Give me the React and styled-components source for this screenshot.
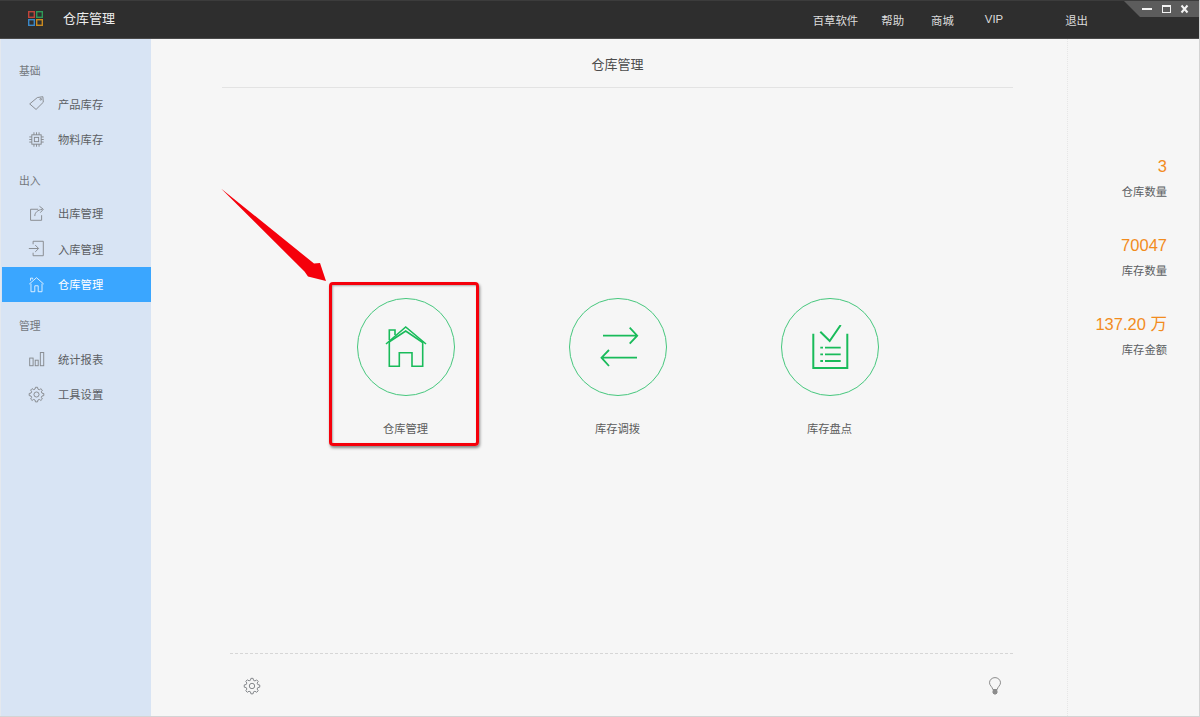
import React from "react";
import styled, { createGlobalStyle } from "styled-components";

const Global = createGlobalStyle`
  html, body { margin: 0; padding: 0; background: #f6f6f6; }
  body { font-family: "Liberation Sans", "Noto Sans CJK SC", sans-serif; }
  * { box-sizing: border-box; }
`;

const Win = styled.div`
  width: 1200px; height: 717px; display: flex; flex-direction: column; overflow: hidden;
  background: #f6f6f6; border-right: 1px solid #d4d4d4; border-bottom: 1px solid #d4d4d4;
  position: relative;
`;
const TitleBar = styled.header`
  height: 39px; flex: none; display: flex; align-items: center; position: relative;
  background: #2e2e2e; border-top: 1px solid #3c3c3c; border-bottom: 1px solid #4a4a4a;
  padding: 0 111px 0 28px;
`;
const Logo = styled.svg`width: 15px; height: 15px; flex: none; margin-top: -2px;`;
const AppName = styled.div`
  margin-left: 20px; font-size: 13px; color: #ececec; line-height: 16px; margin-top: -2px;
`;
const Nav = styled.nav`margin-left: auto; display: flex; align-items: center; padding-top: 2px;`;
const NavItem = styled.span`
  margin-left: ${p => p.$gap}px; font-size: 11.4px; color: #dcdcdc; line-height: 16px;
  margin-top: ${p => (p.$latin ? -4 : 0)}px;
`;
const WinTab = styled.div`
  position: absolute; top: 0; right: 0; width: 75px; height: 16px; background: #5c5c5c;
  clip-path: polygon(0 0, 100% 0, 100% 100%, 16px 100%);
`;
const WinIcons = styled.svg`position: absolute; top: 0; right: 0; width: 75px; height: 16px;`;

const Shell = styled.div`flex: 1; display: flex; min-height: 0; position: relative;`;

const Side = styled.aside`
  width: 151px; flex: none; background: #d8e4f4; padding: 24px 0 0 1px;
  border-left: 1px solid #e4e8ee; display: flex; flex-direction: column; gap: 16px;
`;
const Section = styled.section`display: flex; flex-direction: column;`;
const Heading = styled.div`
  height: 16px; line-height: 17px; padding-left: 17px; margin-bottom: 7px;
  font-size: 10.8px; color: #74787d;
`;
const Item = styled.div`
  height: 35.4px; display: flex; align-items: center; padding-left: 26px; gap: 13px;
  font-size: 11.3px; color: ${p => (p.$active ? "#fff" : "#5c5f63")};
  background: ${p => (p.$active ? "#3aa6ff" : "transparent")};
  & > svg { width: 17px; height: 17px; flex: none; }
`;

const Main = styled.main`flex: 1; display: flex; flex-direction: column; position: relative; min-width: 0;`;
const PageHead = styled.div`
  margin: 0 54px 0 71px; height: 49px; border-bottom: 1px solid #e3e3e3;
  display: flex; align-items: center; justify-content: center;
  font-size: 13px; color: #4c4c4c;
`;
const Cards = styled.div`flex: 1; display: flex; justify-content: center; padding: 210px 54px 0 71px;`;
const Card = styled.div`width: 212px; display: flex; flex-direction: column; align-items: center; position: relative;`;
const Round = styled.div`
  width: 98px; height: 98px; border-radius: 50%; border: 1.3px solid #46c77d;
  display: flex; align-items: center; justify-content: center;
  & > svg { width: 44px; height: 44px; }
`;
const CardLabel = styled.div`margin-top: 25px; font-size: 11.3px; line-height: 16px; color: #5c5c5c;`;
const Highlight = styled.div`
  position: absolute; left: 29.5px; top: -16px; width: 149.5px; height: 163.5px;
  border: 3.5px solid #f5000b; border-radius: 4px;
  box-shadow: 1px 2px 3px rgba(0,0,0,.45), inset 1px 1px 2px rgba(0,0,0,.3);
`;
const Arrow = styled.svg`position: absolute; left: 66px; top: 145px; width: 115px; height: 105px;`;

const Foot = styled.div`
  margin: 0 54px 0 79px; height: 63px; flex: none; border-top: 1px dashed #d6d6d6;
  display: flex; justify-content: space-between; padding: 23px 9px 0 13px;
  & > svg { width: 18px; height: 18px; }
`;

const Stats = styled.aside`
  width: 132px; flex: none; border-left: 1px dotted #e6e6e6; padding: 117px 32px 0 0;
  display: flex; flex-direction: column; align-items: flex-end; gap: 35px;
`;
const Stat = styled.div`display: flex; flex-direction: column; align-items: flex-end; gap: 8px;`;
const Num = styled.div`
  font-family: "Liberation Sans", "Noto Sans CJK SC", sans-serif;
  font-size: 16.5px; line-height: 20px; color: #f28c1e;
`;
const StatLabel = styled.div`font-size: 11.3px; line-height: 16px; color: #5c5f63;`;

const S = { fill: "none", stroke: "#85888c", strokeWidth: 1.1 };

const Tag = () => (
  <svg viewBox="0 0 20 20" {...S}><path d="M2 10.500 11 3l6.500-1 .5 6.500-8.500 8.500z" /><circle cx="15" cy="5" r="1" /></svg>
);
const Chip = () => (
  <svg viewBox="0 0 20 20" {...S}>
    <rect x="4.500" y="4.500" width="11" height="11" /><rect x="7.500" y="7.500" width="5" height="5" />
    <path d="M7 1.500v3M10 1.500v3M13 1.500v3M7 15.500v3M10 15.500v3M13 15.500v3M1.500 7h3M1.500 10h3M1.500 13h3M15.500 7h3M15.500 10h3M15.500 13h3" />
  </svg>
);
const Out = () => (
  <svg viewBox="0 0 20 20" {...S}><path d="M12 5H3v13h13v-6" /><path d="M8 13c0-4 3-7 9-8M13.500 1.500 18 5l-3.500 4" /></svg>
);
const In = () => (
  <svg viewBox="0 0 20 20" {...S}><path d="M6 5V1.500h12v17H6V15" /><path d="M1 10h11M8.500 6l4 4-4 4" /></svg>
);
const Home = ({ c = "#85888c" }) => (
  <svg viewBox="0 0 20 20" fill="none" stroke={c} strokeWidth="1.100">
    <path d="M1.500 9.500 10 2l8.500 7.500M3 5.500V2.500h2.500V4M3.500 9v9.500h4.500v-7h4v7h4.500V9" />
  </svg>
);
const Bars = () => (
  <svg viewBox="0 0 20 20" {...S}><rect x="2" y="9.500" width="4" height="9" /><rect x="8.500" y="12" width="3.500" height="6.500" /><rect x="14.500" y="3" width="4" height="15.500" /></svg>
);
const Gear = () => (
  <svg viewBox="0 0 20 20" {...S}><path d="M8.800 1.500h2.400l.5 2.200 1.600.7 1.900-1.200 1.700 1.700-1.200 1.900.7 1.600 2.200.5v2.400l-2.200.5-.7 1.600 1.200 1.900-1.700 1.700-1.900-1.200-1.600.7-.5 2.200H8.800l-.5-2.200-1.600-.7-1.900 1.200-1.700-1.700 1.200-1.900-.7-1.600-2.200-.5V8.800l2.200-.5.700-1.600-1.200-1.900 1.700-1.700 1.900 1.200 1.600-.7z" /><circle cx="10" cy="10" r="3" /></svg>
);
const Bulb = () => (
  <svg viewBox="0 0 18 18" fill="none" stroke="#8c8c8c" strokeWidth="1">
    <path d="M6.800 12.500C6.500 10 3.500 8.500 3.500 5.800a5.500 5.200 0 0 1 11 0c0 2.700-3 4.200-3.300 6.700z" />
    <path d="M7 13.500h4v2.500l-1 1H8l-1-1z" fill="#8c8c8c" />
  </svg>
);

const G = { fill: "none", stroke: "#19bb5a" };

const BigHome = () => (
  <svg viewBox="0 0 44 44" {...G} strokeWidth="1.600">
    <path d="M2 19 21.700 2 42 19" /><path d="M5 17 21.700 6 38.700 17.500" />
    <path d="M5.300 15V5H11v5" />
    <path d="M5.300 16v25.300h10V27.700H28v13.600h10.700V16" />
  </svg>
);
const Swap = () => (
  <svg viewBox="0 0 44 44" {...G} strokeWidth="1.800">
    <path d="M7 10.700h33.500M33.700 2.700l7.500 8-7.500 8" />
    <path d="M41 32.700H7M13 25l-7.500 7.700 7.500 8.300" />
  </svg>
);
const Check = () => (
  <svg viewBox="0 0 44 44" {...G} strokeWidth="1.800">
    <path d="M5.300 8.700V43h34V8.700" strokeWidth="2" />
    <path d="m12.300 6.700 9.400 9.300L32.700 0" strokeWidth="2" />
    <path d="M12.300 22.700H15M17 22.700h15.700M12.300 29.300H15M17 29.300h15.700M12.300 36H15M17 36h15.700" />
  </svg>
);

const menu = [
  { title: "基础", items: [["产品库存", <Tag />], ["物料库存", <Chip />]] },
  { title: "出入", items: [["出库管理", <Out />], ["入库管理", <In />], ["仓库管理", <Home c="#e4f2ff" />, true]] },
  { title: "管理", items: [["统计报表", <Bars />], ["工具设置", <Gear />]] },
];

export default function App() {
  return (
    <Win>
      <Global />
      <TitleBar>
        <Logo viewBox="0 0 15 15" fill="none" strokeWidth="1.400">
          <rect x=".7" y=".7" width="5.600" height="5.600" stroke="#c0443a" />
          <rect x="8.700" y=".7" width="5.600" height="5.600" stroke="#2f9a58" />
          <rect x=".7" y="8.700" width="5.600" height="5.600" stroke="#3a88c8" />
          <rect x="8.700" y="8.700" width="5.600" height="5.600" stroke="#c98a20" />
        </Logo>
        <AppName>仓库管理</AppName>
        <Nav>
          <NavItem $gap={0}>百草软件</NavItem>
          <NavItem $gap={23}>帮助</NavItem>
          <NavItem $gap={27}>商城</NavItem>
          <NavItem $gap={31} $latin>VIP</NavItem>
          <NavItem $gap={62}>退出</NavItem>
        </Nav>
        <WinTab />
        <WinIcons viewBox="0 0 75 16" fill="none" stroke="#f2f2f2">
          <path d="M18 8h10" strokeWidth="2" />
          <rect x="38.500" y="4.500" width="8" height="7" strokeWidth="1" />
          <path d="M38 5h9" strokeWidth="2" />
          <path d="m57.500 4.500 6 7M63.500 4.500l-6 7" strokeWidth="2" />
        </WinIcons>
      </TitleBar>
      <Shell>
        <Side>
          {menu.map(sec => (
            <Section key={sec.title}>
              <Heading>{sec.title}</Heading>
              {sec.items.map(([label, icon, active]) => (
                <Item key={label} $active={active}>{icon}{label}</Item>
              ))}
            </Section>
          ))}
        </Side>
        <Main>
          <PageHead>仓库管理</PageHead>
          <Cards>
            <Card>
              <Round><BigHome /></Round>
              <CardLabel>仓库管理</CardLabel>
              <Highlight />
            </Card>
            <Card>
              <Round><Swap /></Round>
              <CardLabel>库存调拨</CardLabel>
            </Card>
            <Card>
              <Round><Check /></Round>
              <CardLabel>库存盘点</CardLabel>
            </Card>
          </Cards>
          <Foot>
            <Gear />
            <Bulb />
          </Foot>
          <Arrow viewBox="0 0 115 105">
            <path d="M4 4.500 97 79.500 103 79 109 97 91 92.500 87.500 87.500z" fill="#f5000b" />
          </Arrow>
        </Main>
        <Stats>
          <Stat><Num>3</Num><StatLabel>仓库数量</StatLabel></Stat>
          <Stat><Num>70047</Num><StatLabel>库存数量</StatLabel></Stat>
          <Stat><Num>137.20 万</Num><StatLabel>库存金额</StatLabel></Stat>
        </Stats>
      </Shell>
    </Win>
  );
}
